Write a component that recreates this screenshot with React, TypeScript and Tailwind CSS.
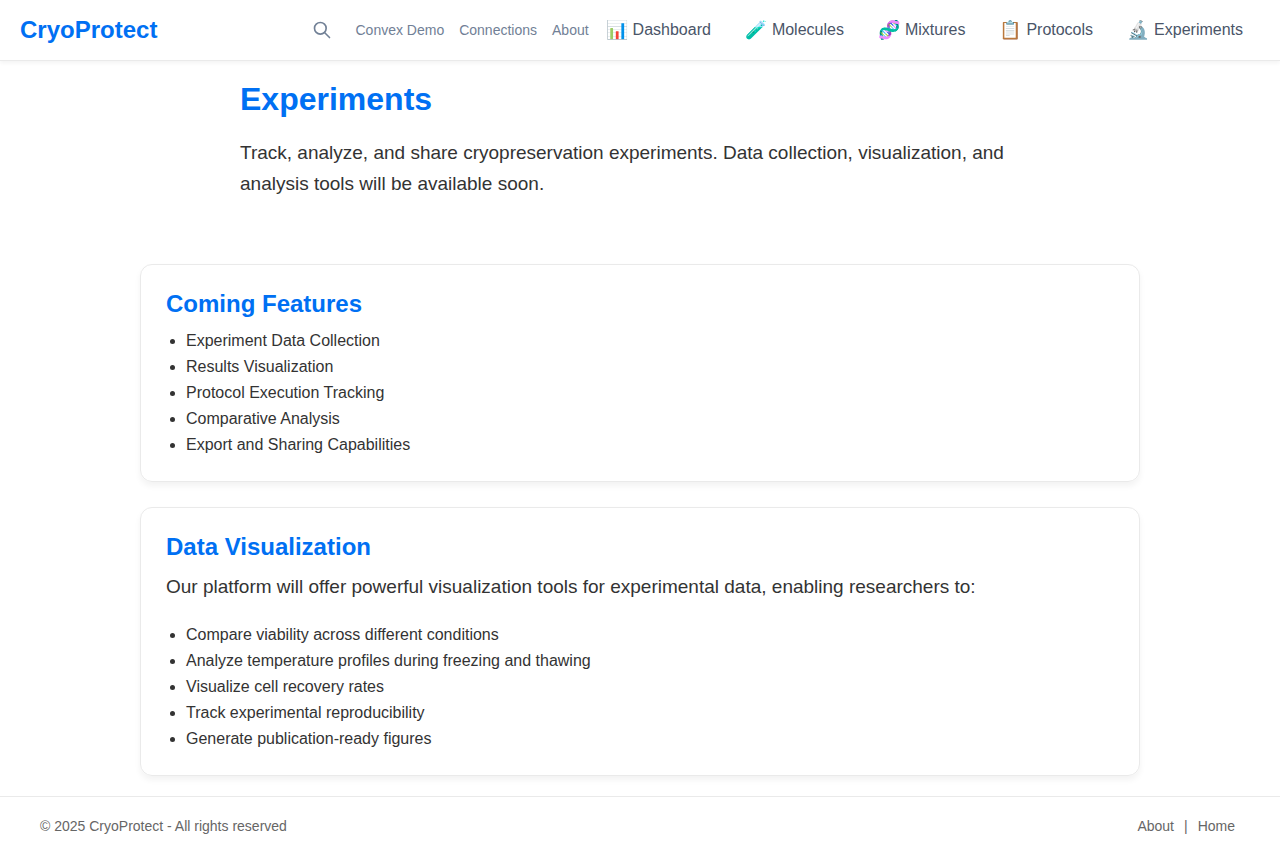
const mainLinks = [
  { icon: "📊", label: "Dashboard" },
  { icon: "🧪", label: "Molecules" },
  { icon: "🧬", label: "Mixtures" },
  { icon: "📋", label: "Protocols" },
  { icon: "🔬", label: "Experiments" },
];

const smallLinks = ["Convex Demo", "Connections", "About"];

const features = [
  "Experiment Data Collection",
  "Results Visualization",
  "Protocol Execution Tracking",
  "Comparative Analysis",
  "Export and Sharing Capabilities",
];

const visualizations = [
  "Compare viability across different conditions",
  "Analyze temperature profiles during freezing and thawing",
  "Visualize cell recovery rates",
  "Track experimental reproducibility",
  "Generate publication-ready figures",
];

function BulletList({ items }: { items: string[] }) {
  return (
    <ul className="list-disc pl-5 text-base/[26px]">
      {items.map((item) => (
        <li key={item}>{item}</li>
      ))}
    </ul>
  );
}

export default function App() {
  return (
    <div className="flex min-h-screen flex-col bg-white font-['Liberation_Sans',Arial,sans-serif] text-[#333333]">
      <header className="flex items-center justify-between border-b border-[#eaeaea] px-5 shadow-[0_2px_4px_rgba(0,0,0,0.05)]">
        <a href="#" className="text-2xl font-bold text-[#0070f3]">CryoProtect</a>
        <nav aria-label="Main" className="flex h-[60px] items-center">
          <button type="button" aria-label="Search" className="mr-[15px] p-2 text-[#718096]">
            <svg width="20" height="20" viewBox="0 0 24 24" fill="none" stroke="currentColor" strokeWidth="2" strokeLinecap="round" strokeLinejoin="round">
              <circle cx="10" cy="10" r="7" />
              <path d="M21 21l-6-6" />
            </svg>
          </button>
          <div className="flex gap-[15px] text-sm text-[#718096]">
            {smallLinks.map((label) => (
              <a key={label} href="#">{label}</a>
            ))}
          </div>
          <div className="ml-[5px] flex gap-[5px] text-[#4a5568]">
            {mainLinks.map(({ icon, label }) => (
              <a key={label} href="#" className="flex items-center gap-[5px] pr-[17px] pl-3">
                <span aria-hidden="true" className="text-lg">{icon}</span>
                {label}
              </a>
            ))}
          </div>
        </nav>
      </header>

      <main className="mx-auto flex w-full max-w-[1040px] grow flex-col p-5">
        <section className="mx-auto mb-[65px] w-full max-w-[800px]">
          <h1 className="text-[32px]/[36px] font-bold text-[#0070f3]">Experiments</h1>
          <p className="mt-5 text-[19px]/[31px]">
            Track, analyze, and share cryopreservation experiments. Data collection, visualization, and analysis tools will be available soon.
          </p>
        </section>
        <section className="mb-[25px] rounded-xl border border-[#eaeaea] px-[25px] pt-[25px] pb-[23px] shadow-[0_4px_6px_rgba(0,0,0,0.05)]">
          <h2 className="mb-[10px] text-2xl/[28px] font-bold text-[#0070f3]">Coming Features</h2>
          <BulletList items={features} />
        </section>
        <section className="rounded-xl border border-[#eaeaea] px-[25px] pt-[25px] pb-[23px] shadow-[0_4px_6px_rgba(0,0,0,0.05)]">
          <h2 className="mb-[10px] text-2xl/[28px] font-bold text-[#0070f3]">Data Visualization</h2>
          <p className="mb-5 text-[19px]/[31px]">
            Our platform will offer powerful visualization tools for experimental data, enabling researchers to:
          </p>
          <BulletList items={visualizations} />
        </section>
      </main>

      <footer className="flex items-center justify-between border-t border-[#eaeaea] px-10 py-5 text-sm/[19px] text-[#666666]">
        <p>© 2025 CryoProtect - All rights reserved</p>
        <nav aria-label="Footer" className="flex gap-[10px] pr-[5px]">
          <a href="#">About</a>
          <span>|</span>
          <a href="#">Home</a>
        </nav>
      </footer>
    </div>
  );
}
